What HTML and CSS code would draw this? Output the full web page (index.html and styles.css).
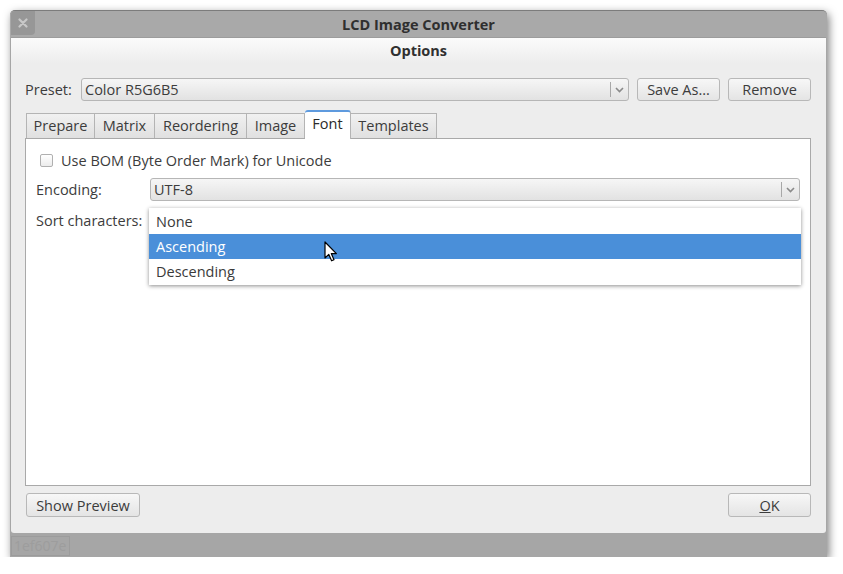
FILE: index.html
```html
<!DOCTYPE html>
<html>
<head>
<meta charset="utf-8">
<link rel="stylesheet" href="styles.css">
</head>
<body>
<div class="window">
  <div class="titlebar">
    <div class="close"><svg width="10" height="10" viewBox="0 0 10 10"><path d="M1.5 1.5 L8.5 8.5 M8.5 1.5 L1.5 8.5" stroke="#c8c8c8" stroke-width="2.2" stroke-linecap="round"/></svg></div>
    <div class="title">LCD Image Converter</div>
  </div>
  <div class="dialog">
    <div class="dlg-head">Options</div>
    <div class="dlg-body">
      <div class="preset-row">
        <span class="label preset-label">Preset:</span>
        <div class="combo preset-combo">
          <span class="combo-text">Color R5G6B5</span>
          <span class="combo-arrow"><svg width="9" height="6" viewBox="0 0 9 6"><path d="M1 1 L4.5 4.5 L8 1" fill="none" stroke="#8a8a8a" stroke-width="1.6"/></svg></span>
        </div>
        <button class="btn btn-save">Save As...</button>
        <button class="btn btn-remove">Remove</button>
      </div>
      <div class="tabs">
        <div class="tab t-prepare">Prepare</div>
        <div class="tab t-matrix">Matrix</div>
        <div class="tab t-reorder">Reordering</div>
        <div class="tab t-image">Image</div>
        <div class="tab t-font active">Font</div>
        <div class="tab t-templates">Templates</div>
      </div>
      <div class="pane">
        <div class="check-row">
          <span class="checkbox"></span>
          <span class="label">Use BOM (Byte Order Mark) for Unicode</span>
        </div>
        <div class="form-row enc-row">
          <span class="label form-label">Encoding:</span>
          <div class="combo enc-combo">
            <span class="combo-text">UTF-8</span>
            <span class="combo-arrow"><svg width="9" height="6" viewBox="0 0 9 6"><path d="M1 1 L4.5 4.5 L8 1" fill="none" stroke="#8a8a8a" stroke-width="1.6"/></svg></span>
          </div>
        </div>
        <div class="form-row sort-row">
          <span class="label form-label">Sort characters:</span>
          <div class="sort-holder">
            <ul class="popup">
              <li>None</li>
              <li class="sel">Ascending</li>
              <li>Descending</li>
            </ul>
          </div>
        </div>
      </div>
      <div class="bottom-row">
        <button class="btn btn-preview">Show Preview</button>
        <button class="btn btn-ok"><u>O</u>K</button>
      </div>
    </div>
  </div>
  <div class="statusbar">
    <span class="hash">1ef607e</span>
  </div>
  <svg class="cursor" width="14" height="22" viewBox="0 0 14 22">
    <path d="M1 1 L1 17 L4.8 13.4 L7.6 19.8 L10 18.8 L7.3 12.6 L12.4 12.6 Z" fill="#fff" stroke="#000" stroke-width="1.2" stroke-linejoin="round"/>
  </svg>
</div>
</body>
</html>
```
FILE: styles.css
```css
html, body {
  margin: 0;
  padding: 0;
  background: #ffffff;
}
body {
  padding: 10px 0 0 10px;
  font-family: "Open Sans", "DejaVu Sans", sans-serif;
  font-size: 14.5px;
  color: #3c3c3c;
}
.window {
  position: relative;
  width: 817px;
  height: 547px;
  background: #a6a6a6;
  border-radius: 5px 5px 0 0;
  box-shadow: 2px 3px 9px rgba(0,0,0,0.5);
  display: flex;
  flex-direction: column;
  box-sizing: border-box;
  border-top: 1px solid #7c7c7c;
}
.titlebar {
  height: 26px;
  display: flex;
  align-items: center;
  position: relative;
  background: #a9a9a9;
  border-radius: 5px 5px 0 0;
}
.close {
  position: absolute;
  left: 1px;
  top: 0;
  width: 24px;
  height: 24px;
  background: #979797;
  border-radius: 4px 0 4px 0;
  display: flex;
  align-items: center;
  justify-content: center;
}
.title {
  flex: 1;
  text-align: center;
  font-weight: bold;
  color: #2f2f2f;
}
.dialog {
  margin: 0 1px;
  height: 496px;
  background: #ededed;
  display: flex;
  flex-direction: column;
  border-radius: 0 0 3px 3px;
  border-top: 1px solid #9c9c9c;
  box-sizing: border-box;
}
.dlg-head {
  height: 25px;
  line-height: 25px;
  text-align: center;
  font-weight: bold;
  color: #303030;
  background: linear-gradient(#fbfbfb, #ededed);
}
.dlg-body {
  padding: 15px 15px 0 14px;
  display: flex;
  flex-direction: column;
}
.preset-row {
  display: flex;
  align-items: center;
  height: 23px;
}
.label {
  white-space: nowrap;
}
.preset-label {
  width: 56px;
}
.combo {
  height: 23px;
  box-sizing: border-box;
  border: 1px solid #b6b6b6;
  border-radius: 3px;
  background: linear-gradient(#f6f6f6, #e2e2e2);
  display: flex;
  align-items: center;
}
.combo-text {
  flex: 1;
  padding-left: 3px;
}
.combo-arrow {
  width: 17px;
  height: 15px;
  border-left: 1px solid #a8a8a8;
  display: flex;
  align-items: center;
  justify-content: center;
}
.preset-combo {
  width: 548px;
}
.btn {
  font-family: inherit;
  font-size: inherit;
  color: #3c3c3c;
  height: 24px;
  border: 1px solid #b8b8b8;
  border-radius: 3px;
  background: linear-gradient(#f7f7f7, #e4e4e4);
  padding: 0;
  margin: 0;
}
.btn-save {
  width: 83px;
  margin-left: 8px;
  height: 23px;
}
.btn-remove {
  width: 83px;
  margin-left: 8px;
  height: 23px;
}
.tabs {
  margin-top: 9px;
  padding-left: 1px;
  height: 28px;
  display: flex;
  align-items: flex-end;
}
.tab {
  height: 25px;
  box-sizing: border-box;
  border: 1px solid #b4b4b4;
  border-bottom: none;
  border-left: none;
  background: linear-gradient(#f1f1f1, #e0e0e0);
  display: flex;
  align-items: center;
  justify-content: center;
  padding-bottom: 2px;
}
.t-prepare { width: 69px; border-left: 1px solid #b4b4b4; }
.t-matrix { width: 60px; }
.t-reorder { width: 92px; }
.t-image { width: 58px; }
.t-font { width: 46px; }
.t-templates { width: 86px; }
.tab.active {
  height: 29px;
  background: #ffffff;
  border-top: 2px solid #5e9ade;
  border-radius: 3px 3px 0 0;
  color: #2a2a2a;
  margin-bottom: -1px;
  position: relative;
  z-index: 1;
  padding-bottom: 5px;
}
.pane {
  height: 348px;
  box-sizing: border-box;
  background: #ffffff;
  border: 1px solid #a9a9a9;
  display: flex;
  flex-direction: column;
  padding: 0 10px 0 10px;
}
.check-row {
  display: flex;
  align-items: center;
  height: 16px;
  margin-top: 13px;
  padding-left: 4px;
}
.checkbox {
  width: 11px;
  height: 11px;
  border: 1px solid #b0b0b0;
  border-radius: 2px;
  background: linear-gradient(#ffffff, #ececec);
  margin-right: 8px;
}
.form-row {
  display: flex;
  align-items: center;
}
.form-label {
  width: 114px;
}
.enc-row {
  margin-top: 10px;
  height: 23px;
}
.enc-combo {
  flex: 1;
}
.sort-row {
  margin-top: 8px;
  height: 23px;
  position: relative;
}
.sort-holder {
  flex: 1;
  height: 23px;
  position: relative;
}
.popup {
  position: absolute;
  left: -1px;
  top: -1px;
  right: -1px;
  margin: 0;
  padding: 1px 0;
  list-style: none;
  background: #ffffff;
  box-shadow: 0 1px 4px rgba(0,0,0,0.45);
  z-index: 5;
}
.popup li {
  height: 25px;
  line-height: 25px;
  padding-left: 7px;
  color: #3a3a3a;
}
.popup li.sel {
  background: #4a8fd9;
  color: #ffffff;
}
.bottom-row {
  margin-top: 7px;
  display: flex;
  justify-content: space-between;
  padding-left: 1px;
}
.btn-preview {
  width: 114px;
}
.btn-ok {
  width: 83px;
}
.statusbar {
  flex: 1;
  display: flex;
  align-items: flex-start;
  padding: 3px 0 0 1px;
  background: #a6a6a6;
}
.hash {
  width: 59px;
  height: 20px;
  box-sizing: border-box;
  border: 1px solid #9c9c9c;
  color: #9d9d9d;
  font-size: 14px;
  line-height: 18px;
  padding-left: 2px;
  overflow: hidden;
}
.cursor {
  position: absolute;
  left: 314px;
  top: 230px;
  z-index: 10;
}
```
